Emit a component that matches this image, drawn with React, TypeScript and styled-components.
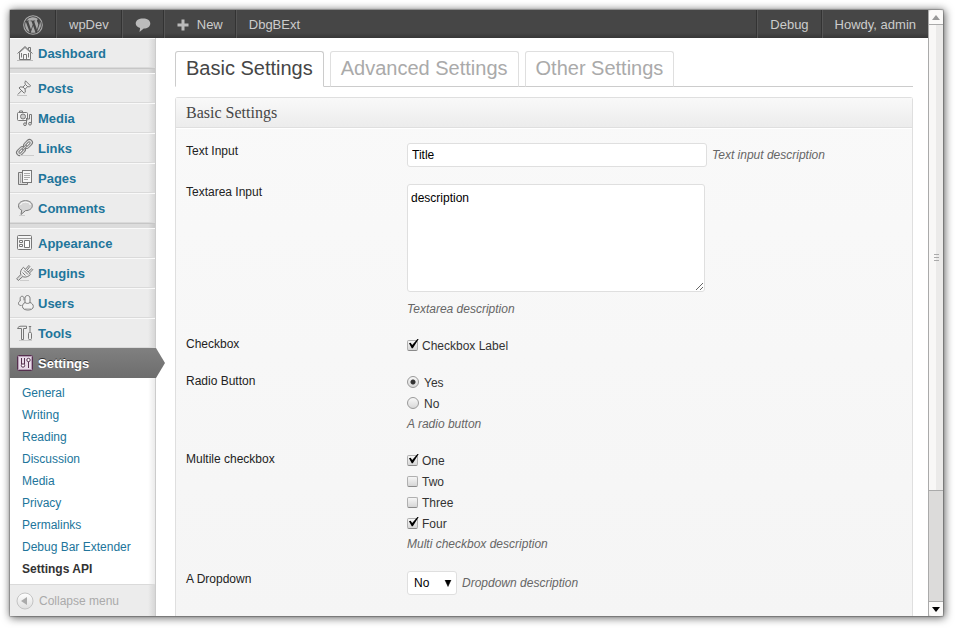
import React, { useState } from "react";
import styled, { createGlobalStyle, css } from "styled-components";

const sans = '"Liberation Sans", Arial, Helvetica, sans-serif';
const serif = 'Georgia, "Liberation Serif", "Times New Roman", serif';

const GlobalStyle = createGlobalStyle`
  *, *::before, *::after { box-sizing: border-box; }
  body { margin: 0; background: #fff; color: #333; font: 12px/16px ${sans}; }
  button, input, select, textarea { font: inherit; margin: 0; }
  ul { list-style: none; margin: 0; padding: 0; }
  a { text-decoration: none; }
`;

/* ---------- window ---------- */

const Screen = styled.div`
  height: 100vh;
  padding: 10px 12px 12px 10px;
  overflow: hidden;
`;

const Window = styled.div`
  display: flex;
  height: 100%;
  background: #fff;
  border-radius: 1px;
  box-shadow: 0 0 1px 1px rgba(0, 0, 0, 0.25), 1px 1px 8px 1px rgba(0, 0, 0, 0.6);
`;

const Page = styled.div`
  flex: 1;
  min-width: 0;
  display: flex;
  flex-direction: column;
  overflow: hidden;
`;

const Columns = styled.div`
  flex: 1;
  min-height: 0;
  display: flex;
`;

/* ---------- admin bar ---------- */

const AdminBar = styled.nav`
  display: flex;
  flex: none;
  height: 28px;
  background: linear-gradient(to top, #373737 0, #464646 5px);
`;

const BarSpacer = styled.div`
  flex: 1;
`;

const BarLink = styled.a<{ $side?: "right" }>`
  display: flex;
  align-items: center;
  gap: 8px;
  padding: 1px 12px 0 13px;
  color: #ccc;
  font-size: 13px;
  line-height: 28px;
  white-space: nowrap;
  ${(p) =>
    p.$side === "right"
      ? css`
          border-left: 1px solid #333;
          box-shadow: inset 1px 0 0 #555;
        `
      : css`
          border-right: 1px solid #333;
          box-shadow: 1px 0 0 #555;
        `}
`;

const PlainBarLink = styled(BarLink)`
  border-right: 0;
  box-shadow: none;
`;

/* ---------- side menu ---------- */

const SideMenu = styled.aside`
  flex: none;
  width: 146px;
  display: flex;
  flex-direction: column;
  border-right: 1px solid #ccc;
  background: linear-gradient(to left, rgba(0, 0, 0, 0.09) 0, rgba(0, 0, 0, 0) 7px) #ececec;
`;

const MenuLink = styled.a<{ $current?: boolean }>`
  display: flex;
  align-items: center;
  gap: 5px;
  height: 30px;
  padding: 2px 0 0 7px;
  border-top: 1px solid #f9f9f9;
  border-bottom: 1px solid #dadada;
  color: #21759b;
  font-size: 13px;
  font-weight: bold;
  > svg { margin-bottom: 2px; }
  ${(p) =>
    p.$current &&
    css`
      position: relative;
      margin-right: -1px;
      border-color: #808080 transparent #6d6d6d;
      background: linear-gradient(#808080, #6d6d6d) border-box;
      color: #fff;
      text-shadow: 0 -1px 0 #333;
      &::after {
        content: "";
        position: absolute;
        top: -1px;
        left: 100%;
        width: 9px;
        height: 30px;
        background: linear-gradient(#808080, #6d6d6d);
        clip-path: polygon(0 0, 100% 50%, 0 100%);
      }
    `}
`;

const MenuSeparator = styled.li`
  height: 5px;
  border-top: 1px solid #c6c6c6;
  background: linear-gradient(to left, rgba(0, 0, 0, 0.09) 0, rgba(0, 0, 0, 0) 7px) #dcdcdc;
`;

const SubMenu = styled.ul`
  padding: 4px 0;
  background: linear-gradient(to left, rgba(0, 0, 0, 0.08) 0, rgba(0, 0, 0, 0) 7px) #fff;
`;

const SubLink = styled.a<{ $current?: boolean }>`
  display: block;
  padding-left: 12px;
  line-height: 22px;
  color: ${(p) => (p.$current ? "#333" : "#21759b")};
  font-weight: ${(p) => (p.$current ? "bold" : "normal")};
`;

const CollapseButton = styled.button`
  display: flex;
  align-items: center;
  gap: 5px;
  height: 36px;
  padding: 1px 0 0 6px;
  border: 0;
  border-top: 1px solid #dadada;
  background: none;
  color: #aaa;
`;

/* ---------- content ---------- */

const Content = styled.main`
  flex: 1;
  min-width: 0;
  display: flex;
  flex-direction: column;
  padding: 13px 15px 0 19px;
`;

const Tabs = styled.div`
  display: flex;
  flex: none;
  gap: 6px;
  border-bottom: 1px solid #ccc;
`;

const Tab = styled.button<{ $active: boolean }>`
  height: 36px;
  margin-bottom: -1px;
  padding: 0 10px 2px;
  border: 1px solid ${(p) => (p.$active ? "#ccc" : "#dfdfdf")};
  border-bottom-color: ${(p) => (p.$active ? "#fff" : "#ccc")};
  border-radius: 3px 3px 0 0;
  background: #fff;
  color: ${(p) => (p.$active ? "#464646" : "#aaa")};
  font-size: 20px;
  line-height: 32px;
  white-space: nowrap;
`;

const Panel = styled.section`
  flex: 1 0 auto;
  margin-top: 10px;
  border: 1px solid #dfdfdf;
  border-bottom: 0;
  border-radius: 3px 3px 0 0;
  background: linear-gradient(#f9f9f9, #f5f5f5);
`;

const PanelTitle = styled.h3`
  margin: 0 0 7px;
  padding: 1px 10px 0;
  border-bottom: 1px solid #dfdfdf;
  box-shadow: 0 1px 0 #fff;
  background: linear-gradient(#f9f9f9, #ececec);
  color: #464646;
  font: normal 16px/28px ${serif};
`;

const FormRow = styled.div`
  display: grid;
  grid-template-columns: 221px 1fr;
  padding: 8px 10px 9px;
  color: #222;
`;

const Field = styled.div`
  display: flex;
  flex-direction: column;
  align-items: flex-start;
`;

const InlineField = styled.div`
  display: flex;
  align-items: center;
  gap: 5px;
`;

const Hint = styled.span`
  color: #666;
  font-style: italic;
  line-height: 20px;
`;

const boxed = css`
  border: 1px solid #dfdfdf;
  border-radius: 3px;
  background: #fff;
  color: #000;
`;

const TextBox = styled.input`
  ${boxed}
  width: 300px;
  height: 24px;
  padding: 0 4px;
`;

const TextArea = styled.textarea`
  ${boxed}
  width: 298px;
  height: 108px;
  margin-bottom: 7px;
  padding: 5px 3px;
`;

const OptionList = styled.div`
  display: grid;
  gap: 1px;
`;

const Option = styled.label<{ $radio?: boolean }>`
  display: flex;
  align-items: center;
  gap: ${(p) => (p.$radio ? 5 : 4)}px;
  line-height: 20px;
  color: #333;
  > input { margin-bottom: 2px; }
`;

const CheckBox = styled.input.attrs({ type: "checkbox" })`
  appearance: none;
  position: relative;
  width: 11px;
  height: 11px;
  border: 1px solid #b0b0b0;
  border-bottom-color: #8a8a8a;
  border-radius: 2px;
  background: linear-gradient(#f6f6f6, #d6d6d6);
  &:checked::after {
    content: "";
    position: absolute;
    left: 0;
    top: -2px;
    width: 11px;
    height: 10px;
    background: #000;
    clip-path: polygon(9% 48%, 24% 42%, 38% 66%, 86% 4%, 100% 0, 44% 98%, 34% 98%);
  }
`;

const Radio = styled.input.attrs({ type: "radio" })`
  appearance: none;
  width: 12px;
  height: 12px;
  border: 1px solid #999;
  border-radius: 50%;
  background: linear-gradient(#f8f8f8, #d8d8d8);
  &:checked {
    background: radial-gradient(circle, #333 0, #333 2px, rgba(51, 51, 51, 0) 3px),
      linear-gradient(#f8f8f8, #d8d8d8);
  }
`;

const SelectWrap = styled.div`
  display: grid;
  grid-template-columns: 1fr;
  align-items: center;
  > * { grid-area: 1 / 1; }
  > svg { justify-self: end; margin-right: 5px; pointer-events: none; }
`;

const Select = styled.select`
  ${boxed}
  appearance: none;
  width: 50px;
  height: 24px;
  padding: 0 0 0 6px;
`;

/* ---------- scroll bar ---------- */

const ScrollBar = styled.div`
  flex: none;
  display: flex;
  flex-direction: column;
  width: 15px;
  border-left: 1px solid #aaa;
  background: #dcdbda;
`;

const ScrollButton = styled.button<{ $end?: boolean }>`
  display: grid;
  place-items: center;
  height: 15px;
  padding: 0;
  border: 0;
  border-${(p) => (p.$end ? "top" : "bottom")}: 1px solid #aaa;
  border-radius: ${(p) => (p.$end ? "0 0 3px 3px" : "3px 3px 0 0")};
  background: #fbfaf9;
`;

const ScrollThumb = styled.div`
  flex: 466;
  display: grid;
  place-items: center;
  border-bottom: 1px solid #aaa;
  background: linear-gradient(to right, #f8f7f6 50%, #ebeae9 50%);
`;

const ScrollTrack = styled.div`
  flex: 110;
`;

/* ---------- icons ---------- */

const WordPressLogo = () => (
  <svg width="20" height="20" viewBox="0 0 20 20" aria-label="WordPress">
    <circle cx="10" cy="10" r="9.3" fill="none" stroke="#aaa" strokeWidth="1.1" />
    <path
      fill="#aaa"
      d="M2.1 10c0 3.1 1.8 5.8 4.5 7.1L2.8 6.8C2.4 7.8 2.1 8.900 2.100 10zM15.300 9.600c0-1-.4-1.600-.6-2.200-.4-.6-.8-1.200-.8-1.800 0-.7.500-1.400 1.300-1.400h.1A7.900 7.900 0 0 0 3.400 5.700h.5c.8 0 2.100-.1 2.100-.1.4 0 .5.600.1.6l-.9.100 2.800 8.300 1.700-5L8.500 6.300l-.8-.1c-.4 0-.4-.6 0-.6 0 0 1.300.1 2 .1.900 0 2.200-.1 2.200-.1.4 0 .5.600.1.6l-.9.100 2.800 8.200.8-2.500c.4-1.100.6-1.800.6-2.400zM10.100 10.700l-2.300 6.800c1.600.5 3.200.4 4.700-.1zM16.900 6.200c.2 1.200-.1 2.500-.5 3.600L14 16.800a7.900 7.900 0 0 0 2.900-10.600z"
    />
  </svg>
);

const BubbleIcon = () => (
  <svg width="16" height="16" viewBox="0 0 16 16" aria-label="Comments">
    <path fill="#bbb" d="M8 1.500c4.200 0 7.300 1.900 7.300 5 0 3-2.800 5-6.600 5L4.500 15l.6-3.900C2.500 10.300.7 8.600.7 6.500c0-3.100 3.100-5 7.300-5z" />
  </svg>
);

const PlusIcon = () => (
  <svg width="12" height="12" viewBox="0 0 12 12" aria-hidden="true">
    <path fill="#bbb" d="M4.500.5h3v4h4v3h-4v4h-3v-4h-4v-3h4z" />
  </svg>
);

const iconPaths: Record<string, React.ReactNode> = {
  dashboard: (
    <>
      <path d="M2.500 7.500v7h11v-7L8 2.500z" fill="#f4f4f4" />
      <path d="M.5 8.500L8 1.500l7.500 7M11.500 4.500v-2h2v4M6.500 14.500v-5h3v5M4.500 8v4.500M11.500 8v4.500" />
      <path d="M0 15.500h16" stroke="#bbb" />
    </>
  ),
  posts: (
    <>
      <path d="M8.500 .8l5.200 5.200-1.500.9-1.500-.3-2.600 2.600.2 3-1.100 1L2 8l1-1.100 3 .2 2.400-2.600-.5-1.700z" fill="#eee" />
      <path d="M4.700 10.500L.8 14.500M8.500 4.500l2.300 2.300M6 7l2.200 2.300" />
      <path d="M0 15.500h10" stroke="#c4c4c4" />
    </>
  ),
  media: (
    <>
      <rect x=".5" y="2.500" width="10" height="8" rx="1" fill="#f4f4f4" />
      <path d="M2.500 2.500V1h3v1.500M2 10.500h7" />
      <circle cx="6" cy="6.500" r="2.500" fill="#ccc" />
      <path d="M9.500 14V8M14.500 13.500V4.500h-2v4.500h-3" fill="#eee" />
      <circle cx="8" cy="14.200" r="1.400" fill="#ddd" />
      <circle cx="13" cy="13.700" r="1.400" fill="#ddd" />
    </>
  ),
  links: (
    <>
      <g transform="rotate(-45 7.500 7.500)">
        <rect x="-2.500" y="4.500" width="10" height="6" rx="3" fill="#e2e2e2" />
        <rect x="0" y="6.500" width="5" height="2" rx="1" fill="#fff" />
        <rect x="7.500" y="4.500" width="10" height="6" rx="3" fill="#e2e2e2" />
        <rect x="10" y="6.500" width="5" height="2" rx="1" fill="#fff" />
        <path d="M4.500 7.500h6" strokeWidth="2.500" />
        <path d="M5 7.500h5" stroke="#e2e2e2" />
      </g>
      <path d="M3 15.500h14" stroke="#ccc" />
    </>
  ),
  pages: (
    <>
      <path d="M5 2.500H1.500v12h9V12" fill="#ddd" />
      <rect x="5.500" y=".5" width="9" height="12" fill="#f6f6f6" />
      <path d="M7 3.500h6M7 5.500h6M7 7.500h6M7 9.500h4M3.500 4v9" stroke="#aaa" />
    </>
  ),
  comments: (
    <>
      <path d="M8.500.7c4 0 6.800 2 6.800 4.900s-2.800 5-6.800 5L4 14.500l.7-4.300C2.400 9.300 1.500 7.800 1.500 5.600c0-2.900 3-4.900 7-4.900z" fill="#d6d6d6" />
      <path d="M3.500 5c.8-2 2.800-2.900 5-2.900s4.300.9 4.900 2.900" stroke="#fff" />
      <path d="M2 15.500h6" stroke="#ccc" />
    </>
  ),
  appearance: (
    <>
      <rect x=".5" y=".5" width="14" height="14" rx="1" fill="#f4f4f4" />
      <path d="M1 3.500h13" stroke="#999" />
      <path d="M2.500 5.500h3v2h-3zM2.500 9.500h3v2h-3zM7.500 5.500h5v7h-5z" fill="#fff" />
    </>
  ),
  plugins: (
    <>
      <path d="M6.500 2.300l7 7c-1.700 2.200-4.500 3.300-7.300 2.600L3.600 9.300C3 6.600 4.300 4 6.500 2.300z" fill="#eee" />
      <path d="M8.500 4.300L11.800.5l1 1L10 5.300M11 7l3.800-3.300 1 1L12.500 8" fill="#eee" />
      <path d="M3.800 9.500L-.3 13.800l1.600 1.700L5.800 11.500" fill="#ddd" />
      <path d="M7 5.500l4 4M5.500 7.500l3 3" />
      <path d="M3 15.500h9" stroke="#ccc" />
    </>
  ),
  users: (
    <>
      <path d="M4.500 10.500c-2 0-3-.6-3-2.200 0-1.200.8-2 1.700-2.300V3.300c0-2.700 3.800-2.700 3.800 0v2" fill="#eee" />
      <path d="M8 7V3.300C8-.4 13-.4 13 3.300V7.500c2 .6 3.300 2.200 3.300 4 0 2.400-2.300 3.500-5.300 3.500s-5.500-1-5.500-3.500c0-2 1-3.200 2.500-4z" fill="#f2f2f2" />
      <path d="M8 7.500c1.500 1.200 3.500 1.200 5 0" />
      <path d="M7.500 13.500h7" stroke="#ccc" />
    </>
  ),
  tools: (
    <>
      <path d="M.5 3.500c.6-1.700 2-2.300 3.500-2.300h5.500v2.300H6.500v11h-2v-11z" fill="#eee" />
      <path d="M13 1v8M11.800 1.500h2.400" />
      <rect x="11.500" y="7.500" width="3" height="7" rx="1" fill="#eee" />
      <path d="M2 15.500h13" stroke="#ccc" />
    </>
  ),
  settings: (
    <>
      <rect x=".5" y=".5" width="15" height="15" rx="1" fill="#e9dcea" stroke="#56304f" />
      <rect x="1.500" y="1.500" width="13" height="13" fill="none" stroke="#b9a0b8" />
      <path d="M4.500 3v6M7.500 3v6M11.500 6v7" stroke="#56304f" />
      <circle cx="6" cy="10.500" r="1.700" fill="#fff" stroke="#56304f" />
      <circle cx="11.500" cy="5" r="1.700" fill="#fff" stroke="#56304f" />
    </>
  ),
};

const MenuIcon = ({ name }: { name: string }) => (
  <svg width="16" height="16" viewBox="0 0 16 16" overflow="visible" fill="none" stroke="#787878" aria-hidden="true">
    {iconPaths[name]}
  </svg>
);

const CollapseIcon = () => (
  <svg width="18" height="18" viewBox="0 0 18 18" aria-hidden="true">
    <defs>
      <linearGradient id="disc" x2="0" y2="1">
        <stop stopColor="#fff" />
        <stop offset="1" stopColor="#dedede" />
      </linearGradient>
    </defs>
    <circle cx="9" cy="9" r="8" fill="url(#disc)" stroke="#c4c4c4" />
    <path d="M5 9l6-4v8z" fill="#aaa" />
  </svg>
);

const Arrow = ({ color, up }: { color: string; up?: boolean }) => (
  <svg width="8" height="5" viewBox="0 0 8 5" aria-hidden="true">
    <path d={up ? "M0 5h8L4 0z" : "M0 0h8L4 5z"} fill={color} />
  </svg>
);

const SelectArrow = () => (
  <svg width="8" height="7" viewBox="0 0 8 7" aria-hidden="true">
    <path d="M1 0h6L4 6.500z" fill="#000" stroke="#000" strokeWidth=".5" />
  </svg>
);

const Grip = () => (
  <svg width="5" height="7" viewBox="0 0 5 7" aria-hidden="true">
    <path d="M0 .5h5M0 3.500h5M0 6.500h5" stroke="#aaa" />
  </svg>
);

/* ---------- data ---------- */

const menuGroups = [
  ["Dashboard"],
  ["Posts", "Media", "Links", "Pages", "Comments"],
  ["Appearance", "Plugins", "Users", "Tools", "Settings"],
];

const settingsPages = [
  "General", "Writing", "Reading", "Discussion", "Media",
  "Privacy", "Permalinks", "Debug Bar Extender", "Settings API",
];

const tabNames = ["Basic Settings", "Advanced Settings", "Other Settings"];

export default function App() {
  const [tab, setTab] = useState(tabNames[0]);

  return (
    <>
      <GlobalStyle />
      <Screen>
        <Window>
          <Page>
            <AdminBar>
              <BarLink href="#"><WordPressLogo /></BarLink>
              <BarLink href="#">wpDev</BarLink>
              <BarLink href="#"><BubbleIcon /></BarLink>
              <BarLink href="#"><PlusIcon />New</BarLink>
              <PlainBarLink href="#">DbgBExt</PlainBarLink>
              <BarSpacer />
              <BarLink href="#" $side="right">Debug</BarLink>
              <BarLink href="#" $side="right">Howdy, admin</BarLink>
            </AdminBar>
            <Columns>
              <SideMenu>
                <ul>
                  {menuGroups.map((group, i) => (
                    <React.Fragment key={i}>
                      {i > 0 && <MenuSeparator />}
                      {group.map((name) => (
                        <li key={name}>
                          <MenuLink href="#" $current={name === "Settings"}>
                            <MenuIcon name={name.toLowerCase()} />
                            {name}
                          </MenuLink>
                        </li>
                      ))}
                    </React.Fragment>
                  ))}
                </ul>
                <SubMenu>
                  {settingsPages.map((name) => (
                    <li key={name}>
                      <SubLink href="#" $current={name === "Settings API"}>{name}</SubLink>
                    </li>
                  ))}
                </SubMenu>
                <CollapseButton type="button"><CollapseIcon />Collapse menu</CollapseButton>
              </SideMenu>
              <Content>
                <Tabs role="tablist">
                  {tabNames.map((name) => (
                    <Tab key={name} type="button" role="tab" aria-selected={tab === name} $active={tab === name} onClick={() => setTab(name)}>
                      {name}
                    </Tab>
                  ))}
                </Tabs>
                <Panel>
                  <PanelTitle>{tab}</PanelTitle>
                  <FormRow>
                    <label htmlFor="text">Text Input</label>
                    <InlineField>
                      <TextBox id="text" type="text" defaultValue="Title" />
                      <Hint>Text input description</Hint>
                    </InlineField>
                  </FormRow>
                  <FormRow>
                    <label htmlFor="area">Textarea Input</label>
                    <Field>
                      <TextArea id="area" defaultValue="description" />
                      <Hint>Textarea description</Hint>
                    </Field>
                  </FormRow>
                  <FormRow>
                    <label htmlFor="check">Checkbox</label>
                    <Option><CheckBox id="check" defaultChecked />Checkbox Label</Option>
                  </FormRow>
                  <FormRow role="radiogroup" aria-labelledby="radio-title">
                    <span id="radio-title">Radio Button</span>
                    <Field>
                      <OptionList>
                        <Option $radio><Radio name="radio" defaultChecked />Yes</Option>
                        <Option $radio><Radio name="radio" />No</Option>
                      </OptionList>
                      <Hint>A radio button</Hint>
                    </Field>
                  </FormRow>
                  <FormRow role="group" aria-labelledby="multi-title">
                    <span id="multi-title">Multile checkbox</span>
                    <Field>
                      <OptionList>
                        <Option><CheckBox defaultChecked />One</Option>
                        <Option><CheckBox />Two</Option>
                        <Option><CheckBox />Three</Option>
                        <Option><CheckBox defaultChecked />Four</Option>
                      </OptionList>
                      <Hint>Multi checkbox description</Hint>
                    </Field>
                  </FormRow>
                  <FormRow>
                    <label htmlFor="dropdown">A Dropdown</label>
                    <InlineField>
                      <SelectWrap>
                        <Select id="dropdown" defaultValue="No">
                          <option>No</option>
                          <option>Yes</option>
                        </Select>
                        <SelectArrow />
                      </SelectWrap>
                      <Hint>Dropdown description</Hint>
                    </InlineField>
                  </FormRow>
                </Panel>
              </Content>
            </Columns>
          </Page>
          <ScrollBar>
            <ScrollButton type="button" aria-label="Scroll up"><Arrow color="#999" up /></ScrollButton>
            <ScrollThumb><Grip /></ScrollThumb>
            <ScrollTrack />
            <ScrollButton type="button" aria-label="Scroll down" $end><Arrow color="#000" /></ScrollButton>
          </ScrollBar>
        </Window>
      </Screen>
    </>
  );
}
